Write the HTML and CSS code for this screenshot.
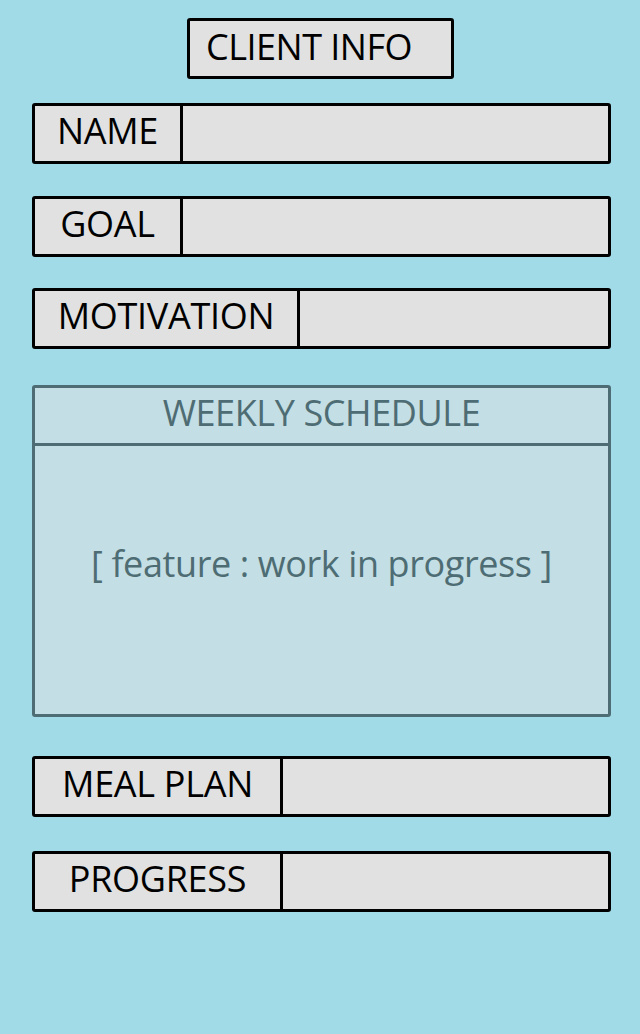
FILE: index.html
```html
<!DOCTYPE html>
<html>
<head>
<meta charset="utf-8">
<link rel="stylesheet" href="styles.css">
</head>
<body>
<main class="page">
  <h1 class="title">CLIENT INFO</h1>

  <div class="field field-name">
    <div class="label label-sm">NAME</div>
    <div class="value"></div>
  </div>

  <div class="field field-goal">
    <div class="label label-sm">GOAL</div>
    <div class="value"></div>
  </div>

  <div class="field field-motivation">
    <div class="label label-lg">MOTIVATION</div>
    <div class="value"></div>
  </div>

  <section class="schedule">
    <div class="schedule-head">WEEKLY SCHEDULE</div>
    <div class="schedule-body">[ feature : work in progress ]</div>
  </section>

  <div class="field field-meal">
    <div class="label label-md">MEAL PLAN</div>
    <div class="value"></div>
  </div>

  <div class="field field-progress">
    <div class="label label-md">PROGRESS</div>
    <div class="value"></div>
  </div>
</main>
</body>
</html>
```

FILE: styles.css
```css
html, body {
  margin: 0;
  padding: 0;
  background: #a1dbe8;
}

body {
  font-family: "Open Sans", "Noto Sans", sans-serif;
  color: #000;
}

.page {
  display: flex;
  flex-direction: column;
  padding: 18px 29px 0 32px;
  min-height: 1034px;
  box-sizing: border-box;
}

.title {
  align-self: flex-start;
  margin: 0 0 24px 155px;
  width: 267px;
  height: 61px;
  box-sizing: border-box;
  border: 3px solid #000;
  border-radius: 3px;
  background: #e1e1e1;
  font-weight: 400;
  font-size: 36px;
  line-height: 52px;
  padding-left: 16px;
  letter-spacing: -0.5px;
}

.field {
  display: flex;
  height: 61px;
  box-sizing: border-box;
  border: 3px solid #000;
  border-radius: 3px;
  background: #e1e1e1;
}

.field-name { margin-bottom: 32px; }
.field-goal { margin-bottom: 31px; }
.field-motivation { margin-bottom: 36px; }
.field-meal { margin-bottom: 34px; }

.label {
  flex: none;
  box-sizing: border-box;
  border-right: 3px solid #000;
  text-align: center;
  font-size: 36px;
  line-height: 50px;
  letter-spacing: -0.3px;
}

.label-sm { width: 148px; }
.label-lg { width: 265px; }
.label-md { width: 248px; }

.value { flex: 1; }

.schedule {
  display: flex;
  flex-direction: column;
  height: 332px;
  box-sizing: border-box;
  border: 3px solid #4e6c73;
  border-radius: 3px;
  background: #c3dee4;
  color: #4e6c73;
  margin-bottom: 39px;
}

.schedule-head {
  height: 58px;
  box-sizing: border-box;
  border-bottom: 3px solid #4e6c73;
  text-align: center;
  font-size: 36px;
  line-height: 50px;
  letter-spacing: -0.4px;
}

.schedule-body {
  flex: 1;
  text-align: center;
  font-size: 36px;
  padding-top: 93px;
  letter-spacing: -0.4px;
}
```
